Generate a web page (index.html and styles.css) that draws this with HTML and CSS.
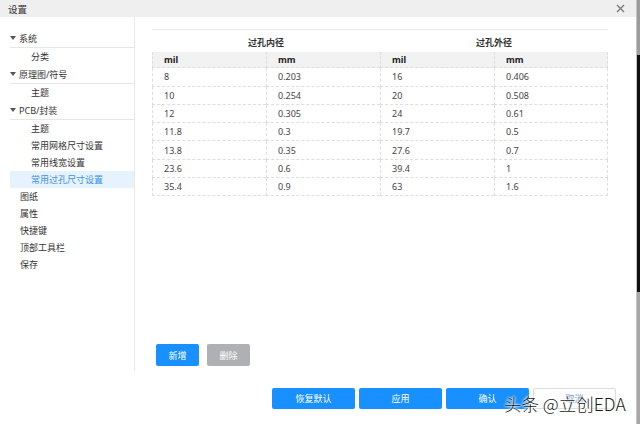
FILE: index.html
```html
<!DOCTYPE html>
<html lang="zh">
<head>
<meta charset="utf-8">
<title>设置</title>
<link rel="stylesheet" href="styles.css">
</head>
<body>
<div class="dialog">
  <div class="titlebar">
    <span class="title">设置</span>
    <svg class="close" width="9" height="9" viewBox="0 0 9 9"><path d="M1 1L8 8M8 1L1 8" stroke="#7a7a7a" stroke-width="1.4" fill="none"/></svg>
  </div>
  <div class="content">
    <nav class="sidebar">
      <div class="item group"><span class="tri"></span>系统</div>
      <div class="item sub">分类</div>
      <div class="item group"><span class="tri"></span>原理图/符号</div>
      <div class="item sub">主题</div>
      <div class="item group"><span class="tri"></span>PCB/封装</div>
      <div class="item sub">主题</div>
      <div class="item sub">常用网格尺寸设置</div>
      <div class="item sub">常用线宽设置</div>
      <div class="item sub active">常用过孔尺寸设置</div>
      <div class="item top">图纸</div>
      <div class="item top">属性</div>
      <div class="item top">快捷键</div>
      <div class="item top">顶部工具栏</div>
      <div class="item top">保存</div>
    </nav>
    <main class="main">
      <div class="vias">
        <div class="cap">过孔内径</div>
        <div class="cap">过孔外径</div>
        <div class="th first">mil</div><div class="th">mm</div><div class="th">mil</div><div class="th last">mm</div>
        <div class="td first">8</div><div class="td">0.203</div><div class="td">16</div><div class="td last">0.406</div>
        <div class="td first">10</div><div class="td">0.254</div><div class="td">20</div><div class="td last">0.508</div>
        <div class="td first">12</div><div class="td">0.305</div><div class="td">24</div><div class="td last">0.61</div>
        <div class="td first">11.8</div><div class="td">0.3</div><div class="td">19.7</div><div class="td last">0.5</div>
        <div class="td first">13.8</div><div class="td">0.35</div><div class="td">27.6</div><div class="td last">0.7</div>
        <div class="td first">23.6</div><div class="td">0.6</div><div class="td">39.4</div><div class="td last">1</div>
        <div class="td first">35.4</div><div class="td">0.9</div><div class="td">63</div><div class="td last">1.6</div>
      </div>
      <div class="actions">
        <button class="btn small primary">新增</button>
        <button class="btn small disabled">删除</button>
      </div>
    </main>
  </div>
  <div class="footer">
    <button class="btn wide primary">恢复默认</button>
    <button class="btn wide primary">应用</button>
    <button class="btn wide primary">确认</button>
    <button class="btn wide plain">取消</button>
  </div>
</div>
<div class="edge"><div class="edge-bar"></div></div>
<div class="watermark">头条 @立创EDA</div>
</body>
</html>
```
FILE: styles.css
```css
* { box-sizing: border-box; }
html, body { margin: 0; padding: 0; }
body {
  width: 640px;
  height: 424px;
  overflow: hidden;
  display: flex;
  background: #fff;
  font-family: "Noto Sans", "Noto Sans CJK SC", sans-serif;
  font-size: 9px;
  color: #333;
  position: relative;
}
.dialog {
  width: 636px;
  height: 424px;
  display: flex;
  flex-direction: column;
}
.titlebar {
  height: 17px;
  background: #efefef;
  display: flex;
  align-items: center;
  justify-content: space-between;
  padding: 0 11px 0 8px;
}
.title { font-size: 9.5px; color: #333; }
.close { display: block; }
.content {
  height: 353px;
  display: flex;
}
.sidebar {
  width: 135px;
  padding: 12px 0 0 10px;
  border-right: 1px solid #e8e8e8;
}
.item {
  height: 17px;
  white-space: nowrap;
  display: flex;
  align-items: center;
}
.item.group { height: 19px; border-bottom: 1px solid #e6e6e6; }
.tri {
  width: 0; height: 0;
  border-left: 3px solid transparent;
  border-right: 3px solid transparent;
  border-top: 4px solid #555;
  margin-right: 3px;
}
.item.sub { padding-left: 21px; }
.item.top { padding-left: 10px; }
.item.active { background: #e6f3ff; color: #3b8fe8; }
.main {
  flex: 1;
  padding: 12px 0 4px 17px;
  display: flex;
  flex-direction: column;
}
.vias {
  width: 456px;
  display: grid;
  grid-template-columns: repeat(4, 114px);
  border-top: 1px solid #e8e8e8;
}
.cap {
  grid-column: span 2;
  height: 22px;
  padding-top: 3px;
  display: flex;
  align-items: center;
  justify-content: center;
  font-weight: 600;
  color: #333;
}
.th, .td {
  padding-left: 11px;
  display: flex;
  align-items: center;
  border-left: 1px dashed #dedede;
  border-bottom: 1px dashed #dedede;
}
.th {
  height: 16.3px;
  background: #f2f2f2;
  font-weight: 700;
  color: #222;
}
.td { height: 18.3px; color: #444; }
.last { border-right: 1px dashed #dedede; }
.actions {
  margin-top: auto;
  display: flex;
  gap: 8px;
  padding-left: 4px;
}
.btn {
  border: none;
  font-family: inherit;
  font-size: 9px;
  color: #fff;
  padding: 0;
  border-radius: 2px;
}
.btn.small { width: 43px; height: 22px; }
.btn.wide { width: 83px; height: 21px; }
.primary { background: #1890ff; }
.disabled { background: #aeb0b3; }
.plain { background: #fff; border: 1px solid #dcdcdc; color: #6f93cf; }
.footer {
  flex: 1;
  display: flex;
  justify-content: flex-end;
  align-items: flex-start;
  gap: 4px;
  padding: 18px 20px 0 0;
}
.edge {
  width: 4px;
  height: 424px;
  border-left: 1px solid #c4c4c4;
}
.edge-bar {
  height: 100%;
  background: linear-gradient(#9c9c9c 0 55px, #111 55px 292px, #a8a8a8 292px);
}
.watermark {
  position: absolute;
  left: 504px;
  top: 391px;
  font-family: "Noto Sans CJK SC", sans-serif;
  font-weight: 300;
  font-size: 17.5px;
  color: #1a1a1a;
  white-space: nowrap;
  text-shadow: 0 0 2px #fff, 0 0 2px #fff, 0 0 3px #fff;
}
```
